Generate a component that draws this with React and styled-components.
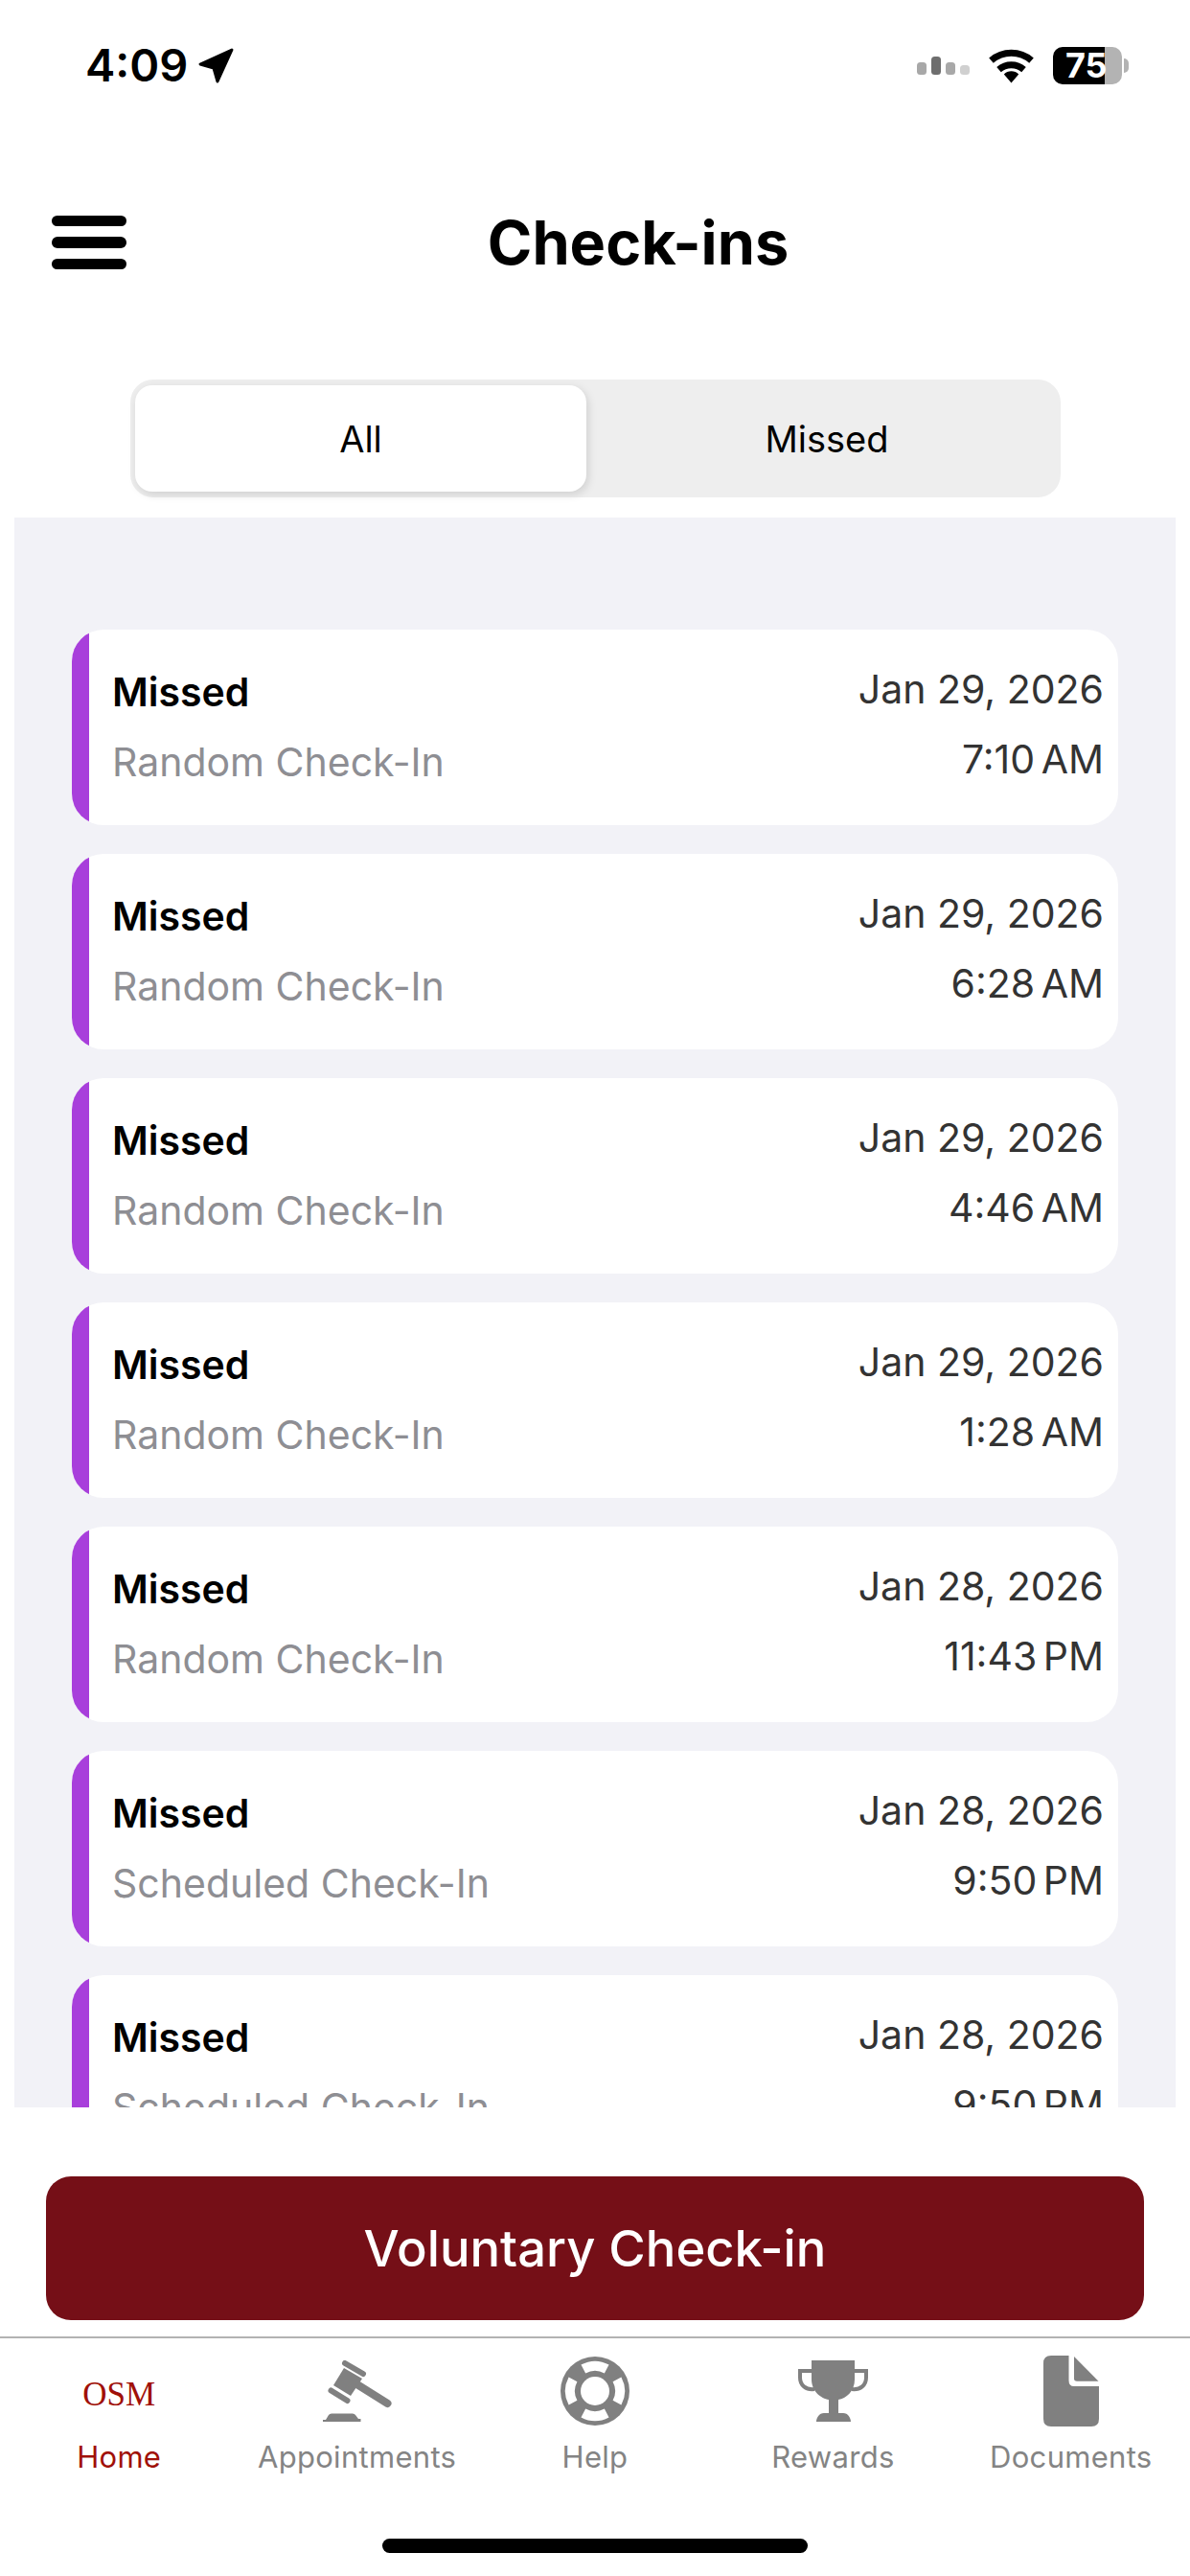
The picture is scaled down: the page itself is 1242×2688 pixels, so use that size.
import React from "react";
import styled, { createGlobalStyle } from "styled-components";

const Global = createGlobalStyle`
  html, body { margin: 0; padding: 0; background: #fff; }
  * { box-sizing: border-box; }
`;

const font = `Inter, "Liberation Sans", sans-serif`;

const Screen = styled.div`
  width: 1242px;
  height: 2688px;
  display: flex;
  flex-direction: column;
  overflow: hidden;
  background: #fff;
  font-family: ${font};
  color: #000;
`;

const StatusBar = styled.div`
  height: 136px;
  display: flex;
  align-items: center;
  justify-content: space-between;
  padding: 0 71px 0 89px;
`;
const StatusLeft = styled.div`
  display: flex;
  align-items: center;
  gap: 11px;
`;
const Clock = styled.span`
  font-size: 47px;
  font-weight: 600;
  line-height: 48px;
`;
const StatusRight = styled.div`
  display: flex;
  align-items: center;
  gap: 20px;
`;
const Battery = styled.div`
  position: relative;
  width: 72px;
  height: 39px;
  border-radius: 10px;
  background: linear-gradient(to right, #000 54px, #b3b3b3 54px);
  color: #fff;
  font-size: 36px;
  font-weight: 700;
  line-height: 39px;
  padding-left: 13px;
  &::after {
    content: "";
    position: absolute;
    left: 74px;
    top: 12px;
    width: 5px;
    height: 15px;
    border-radius: 0 8px 8px 0;
    background: #b3b3b3;
  }
`;

const Header = styled.header`
  height: 234px;
  display: flex;
  align-items: center;
  padding: 0 42px 0 54px;
`;
const Burger = styled.div`
  width: 78px;
  display: flex;
  flex-direction: column;
  gap: 11px;
`;
const BurgerLine = styled.span`
  display: block;
  height: 11.5px;
  border-radius: 6px;
  background: #000;
`;
const Title = styled.h1`
  flex: 1;
  margin: 0;
  text-align: center;
  font-size: 63px;
  font-weight: 700;
  line-height: 76px;
`;

const Segmented = styled.div`
  width: 971px;
  height: 123px;
  margin: 26px 0 21px 136px;
  padding: 6px 0 6px 5px;
  display: flex;
  border-radius: 24px;
  background: #eeeeee;
`;
const Segment = styled.div`
  width: ${(p) => (p.$active ? "471px" : "495px")};
  padding-left: ${(p) => (p.$active ? "0" : "7px")};
  display: flex;
  align-items: center;
  justify-content: center;
  border-radius: 18px;
  font-size: 38px;
  font-weight: 400;
  background: ${(p) => (p.$active ? "#fff" : "transparent")};
  box-shadow: ${(p) => (p.$active ? "2px 3px 10px rgba(0,0,0,.13)" : "none")};
`;

const Panel = styled.main`
  flex: 1;
  min-height: 0;
  margin: 0 15px;
  padding: 117px 60px 0;
  display: flex;
  flex-direction: column;
  gap: 30px;
  overflow: hidden;
  background: #f2f2f7;
`;
const Card = styled.article`
  flex: 0 0 204px;
  display: flex;
  overflow: hidden;
  border-radius: 33px;
  background: #fff;
`;
const Stripe = styled.span`
  flex: 0 0 18px;
  background: #a83fdb;
`;
const CardBody = styled.div`
  flex: 1;
  display: flex;
  align-items: center;
  justify-content: space-between;
  padding: 0 15px 0 24px;
`;
const Column = styled.div`
  display: flex;
  flex-direction: column;
  align-items: ${(p) => (p.$right ? "flex-end" : "flex-start")};
  padding-bottom: ${(p) => (p.$right ? "6px" : "0")};
`;
const Status = styled.span`
  font-size: 41px;
  font-weight: 600;
  line-height: 73px;
  color: #000;
`;
const Kind = styled.span`
  font-size: 41px;
  font-weight: 400;
  line-height: 73px;
  color: #8e8e93;
`;
const When = styled.span`
  font-size: 41px;
  font-weight: 400;
  line-height: 73px;
  color: #333;
  word-spacing: ${(p) => (p.$tight ? "-5px" : "0")};
`;

const Footer = styled.footer`
  flex: 0 0 489px;
  display: flex;
  flex-direction: column;
  padding-top: 72px;
`;
const CheckInButton = styled.button`
  height: 150px;
  margin: 0 48px 17px;
  border: 0;
  border-radius: 26px;
  background: #750f17;
  color: #fff;
  font-family: ${font};
  font-size: 52.5px;
  font-weight: 500;
`;
const TabBar = styled.nav`
  display: grid;
  grid-template-columns: repeat(5, 1fr);
  padding-top: 18px;
  border-top: 2px solid #b2b2b2;
`;
const Tab = styled.div`
  display: flex;
  flex-direction: column;
  align-items: center;
  color: ${(p) => (p.$active ? "#a01008" : "#848484")};
`;
const IconSlot = styled.div`
  height: 74px;
  display: flex;
  align-items: center;
  justify-content: center;
`;
const Logo = styled.span`
  padding-top: 8px;
  font-family: "Liberation Serif", serif;
  font-size: 35px;
  line-height: 40px;
`;
const TabLabel = styled.span`
  margin-top: 13px;
  font-size: 31px;
  line-height: 38px;
  letter-spacing: 0.3px;
`;
const HomeIndicator = styled.div`
  width: 444px;
  height: 15px;
  margin: auto auto 24px;
  border-radius: 8px;
  background: #000;
`;

const LocationArrow = () => (
  <svg width="37" height="37" viewBox="0 0 37 37" fill="#000" stroke="#000" strokeWidth="3" strokeLinejoin="round">
    <path d="M35 2 L2 17 L16 21 L20 35 Z" />
  </svg>
);
const Signal = () => (
  <svg width="55" height="19" viewBox="0 0 55 19">
    <rect x="0" y="6" width="10" height="13" rx="3.5" fill="#a8a8a8" />
    <rect x="15" y="0" width="10" height="19" rx="3.5" fill="#6e6e6e" />
    <rect x="30" y="6" width="10" height="13" rx="3.5" fill="#a8a8a8" />
    <rect x="45" y="9" width="10" height="10" rx="3.5" fill="#d0d0d0" />
  </svg>
);
const Wifi = () => (
  <svg width="47" height="38" viewBox="0 0 47 38" fill="none" stroke="#000" strokeWidth="7">
    <path d="M2.5 14.2 A32 32 0 0 1 44.5 14.2" />
    <path d="M10.5 23.6 A20 20 0 0 1 36.5 23.6" />
    <path d="M15.8 28.5 A11 11 0 0 1 31.2 28.5 L23.5 37.5 Z" fill="#000" stroke="none" />
  </svg>
);
const Gavel = () => (
  <svg width="72" height="64" viewBox="0 0 72 64" fill="#808080">
    <path d="M22 8 L41 19 L29 37 L11 26 Z" />
    <path d="M23 3 L42 14 M8.500 31.500 L25.500 42" stroke="#808080" strokeWidth="6" strokeLinecap="round" />
    <path d="M34 24 L67.500 45" stroke="#808080" strokeWidth="8" strokeLinecap="round" />
    <path d="M3 62 L6 57 Q7 55.500 9 55.500 H31 Q33 55.500 34 57 L37 61 H39.500 V64 H0 V62 Z" />
  </svg>
);
const Lifebuoy = () => (
  <svg width="72" height="72" viewBox="0 0 72 72">
    <circle cx="36" cy="36" r="36" fill="#808080" />
    <path
      d="M23.800 13 A26 26 0 0 1 48.200 13 M59 23.800 A26 26 0 0 1 59 48.200 M48.200 59 A26 26 0 0 1 23.800 59 M13 48.200 A26 26 0 0 1 13 23.800"
      fill="none"
      stroke="#fff"
      strokeWidth="10"
    />
    <circle cx="36" cy="36" r="15" fill="#fff" />
  </svg>
);
const Trophy = () => (
  <svg width="73" height="64" viewBox="0 0 73 64" fill="#808080">
    <path d="M14 0 H59 V20 C59 32 50 40 42 41 V55 H47 C52 55 55 60 55 64 H19 C19 60 22 55 27 55 H32 V41 C24 40 14 32 14 20 Z" />
    <path d="M14 11 H2 V18 C2 26 8 31 17 30 M59 11 H71 V18 C71 26 65 31 56 30" fill="none" stroke="#808080" strokeWidth="4" />
  </svg>
);
const DocumentIcon = () => (
  <svg width="58" height="74" viewBox="0 0 58 74" fill="#808080">
    <path d="M8 0 H26.500 V26 Q26.500 32 32 32 H58 V66 Q58 74 50 74 H8 Q0 74 0 66 V8 Q0 0 8 0 Z" />
    <path d="M32 1 V24 Q32 26.700 35 26.700 H57.500 Z" />
  </svg>
);

const rows = [
  ["Random Check-In", "Jan 29, 2026", "7:10 AM"],
  ["Random Check-In", "Jan 29, 2026", "6:28 AM"],
  ["Random Check-In", "Jan 29, 2026", "4:46 AM"],
  ["Random Check-In", "Jan 29, 2026", "1:28 AM"],
  ["Random Check-In", "Jan 28, 2026", "11:43 PM"],
  ["Scheduled Check-In", "Jan 28, 2026", "9:50 PM"],
  ["Scheduled Check-In", "Jan 28, 2026", "9:50 PM"],
];

export default function App() {
  return (
    <Screen>
      <Global />
      <StatusBar>
        <StatusLeft>
          <Clock>4:09</Clock>
          <LocationArrow />
        </StatusLeft>
        <StatusRight>
          <Signal />
          <Wifi />
          <Battery>75</Battery>
        </StatusRight>
      </StatusBar>
      <Header>
        <Burger>
          <BurgerLine />
          <BurgerLine />
          <BurgerLine />
        </Burger>
        <Title>Check-ins</Title>
      </Header>
      <Segmented>
        <Segment $active>All</Segment>
        <Segment>Missed</Segment>
      </Segmented>
      <Panel>
        {rows.map(([kind, date, time], i) => (
          <Card key={i}>
            <Stripe />
            <CardBody>
              <Column>
                <Status>Missed</Status>
                <Kind>{kind}</Kind>
              </Column>
              <Column $right>
                <When>{date}</When>
                <When $tight>{time}</When>
              </Column>
            </CardBody>
          </Card>
        ))}
      </Panel>
      <Footer>
        <CheckInButton>Voluntary Check-in</CheckInButton>
        <TabBar>
          <Tab $active>
            <IconSlot>
              <Logo>OSM</Logo>
            </IconSlot>
            <TabLabel>Home</TabLabel>
          </Tab>
          <Tab>
            <IconSlot>
              <Gavel />
            </IconSlot>
            <TabLabel>Appointments</TabLabel>
          </Tab>
          <Tab>
            <IconSlot>
              <Lifebuoy />
            </IconSlot>
            <TabLabel>Help</TabLabel>
          </Tab>
          <Tab>
            <IconSlot>
              <Trophy />
            </IconSlot>
            <TabLabel>Rewards</TabLabel>
          </Tab>
          <Tab>
            <IconSlot>
              <DocumentIcon />
            </IconSlot>
            <TabLabel>Documents</TabLabel>
          </Tab>
        </TabBar>
        <HomeIndicator />
      </Footer>
    </Screen>
  );
}
